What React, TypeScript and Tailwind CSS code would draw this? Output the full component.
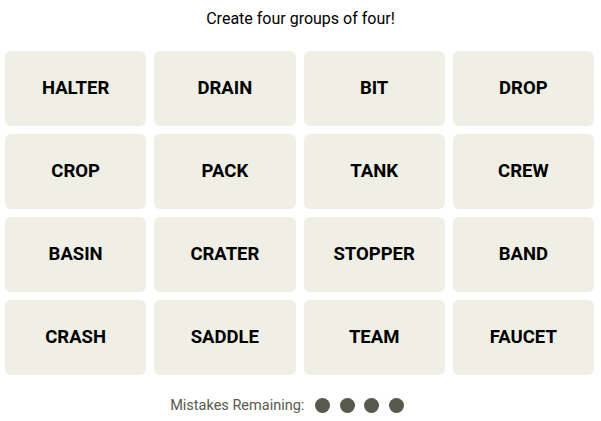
import React from "react"

const words = [
  "HALTER", "DRAIN", "BIT", "DROP",
  "CROP", "PACK", "TANK", "CREW",
  "BASIN", "CRATER", "STOPPER", "BAND",
  "CRASH", "SADDLE", "TEAM", "FAUCET",
]

export default function App() {
  return (
    <div className="w-[601px] h-[421px] bg-white" style={{ fontFamily: "Roboto, 'Liberation Sans', sans-serif" }}>
      <p className="pt-[9px] text-center text-[16px] leading-[20px] text-black">Create four groups of four!</p>

      {/* Board */}
      <div className="ml-[5px] mt-[22px] grid w-[589px] grid-cols-4 gap-x-[8px] gap-y-[8px]">
        {words.map((w) => (
          <button
            key={w}
            className="flex h-[75px] items-center justify-center rounded-[6px] bg-[#efefe6] text-[18.5px] font-bold text-black"
          >
            {w}
          </button>
        ))}
      </div>

      {/* Mistakes */}
      <div className="mt-[20px] flex items-center justify-center pr-[27px]">
        <span className="text-[14.5px] text-[#5a594e]">Mistakes Remaining:</span>
        <div className="ml-[11px] flex gap-[9.5px]">
          <span className="h-[15px] w-[15px] rounded-full bg-[#5a594e]" />
          <span className="h-[15px] w-[15px] rounded-full bg-[#5a594e]" />
          <span className="h-[15px] w-[15px] rounded-full bg-[#5a594e]" />
          <span className="h-[15px] w-[15px] rounded-full bg-[#5a594e]" />
        </div>
      </div>
    </div>
  )
}
